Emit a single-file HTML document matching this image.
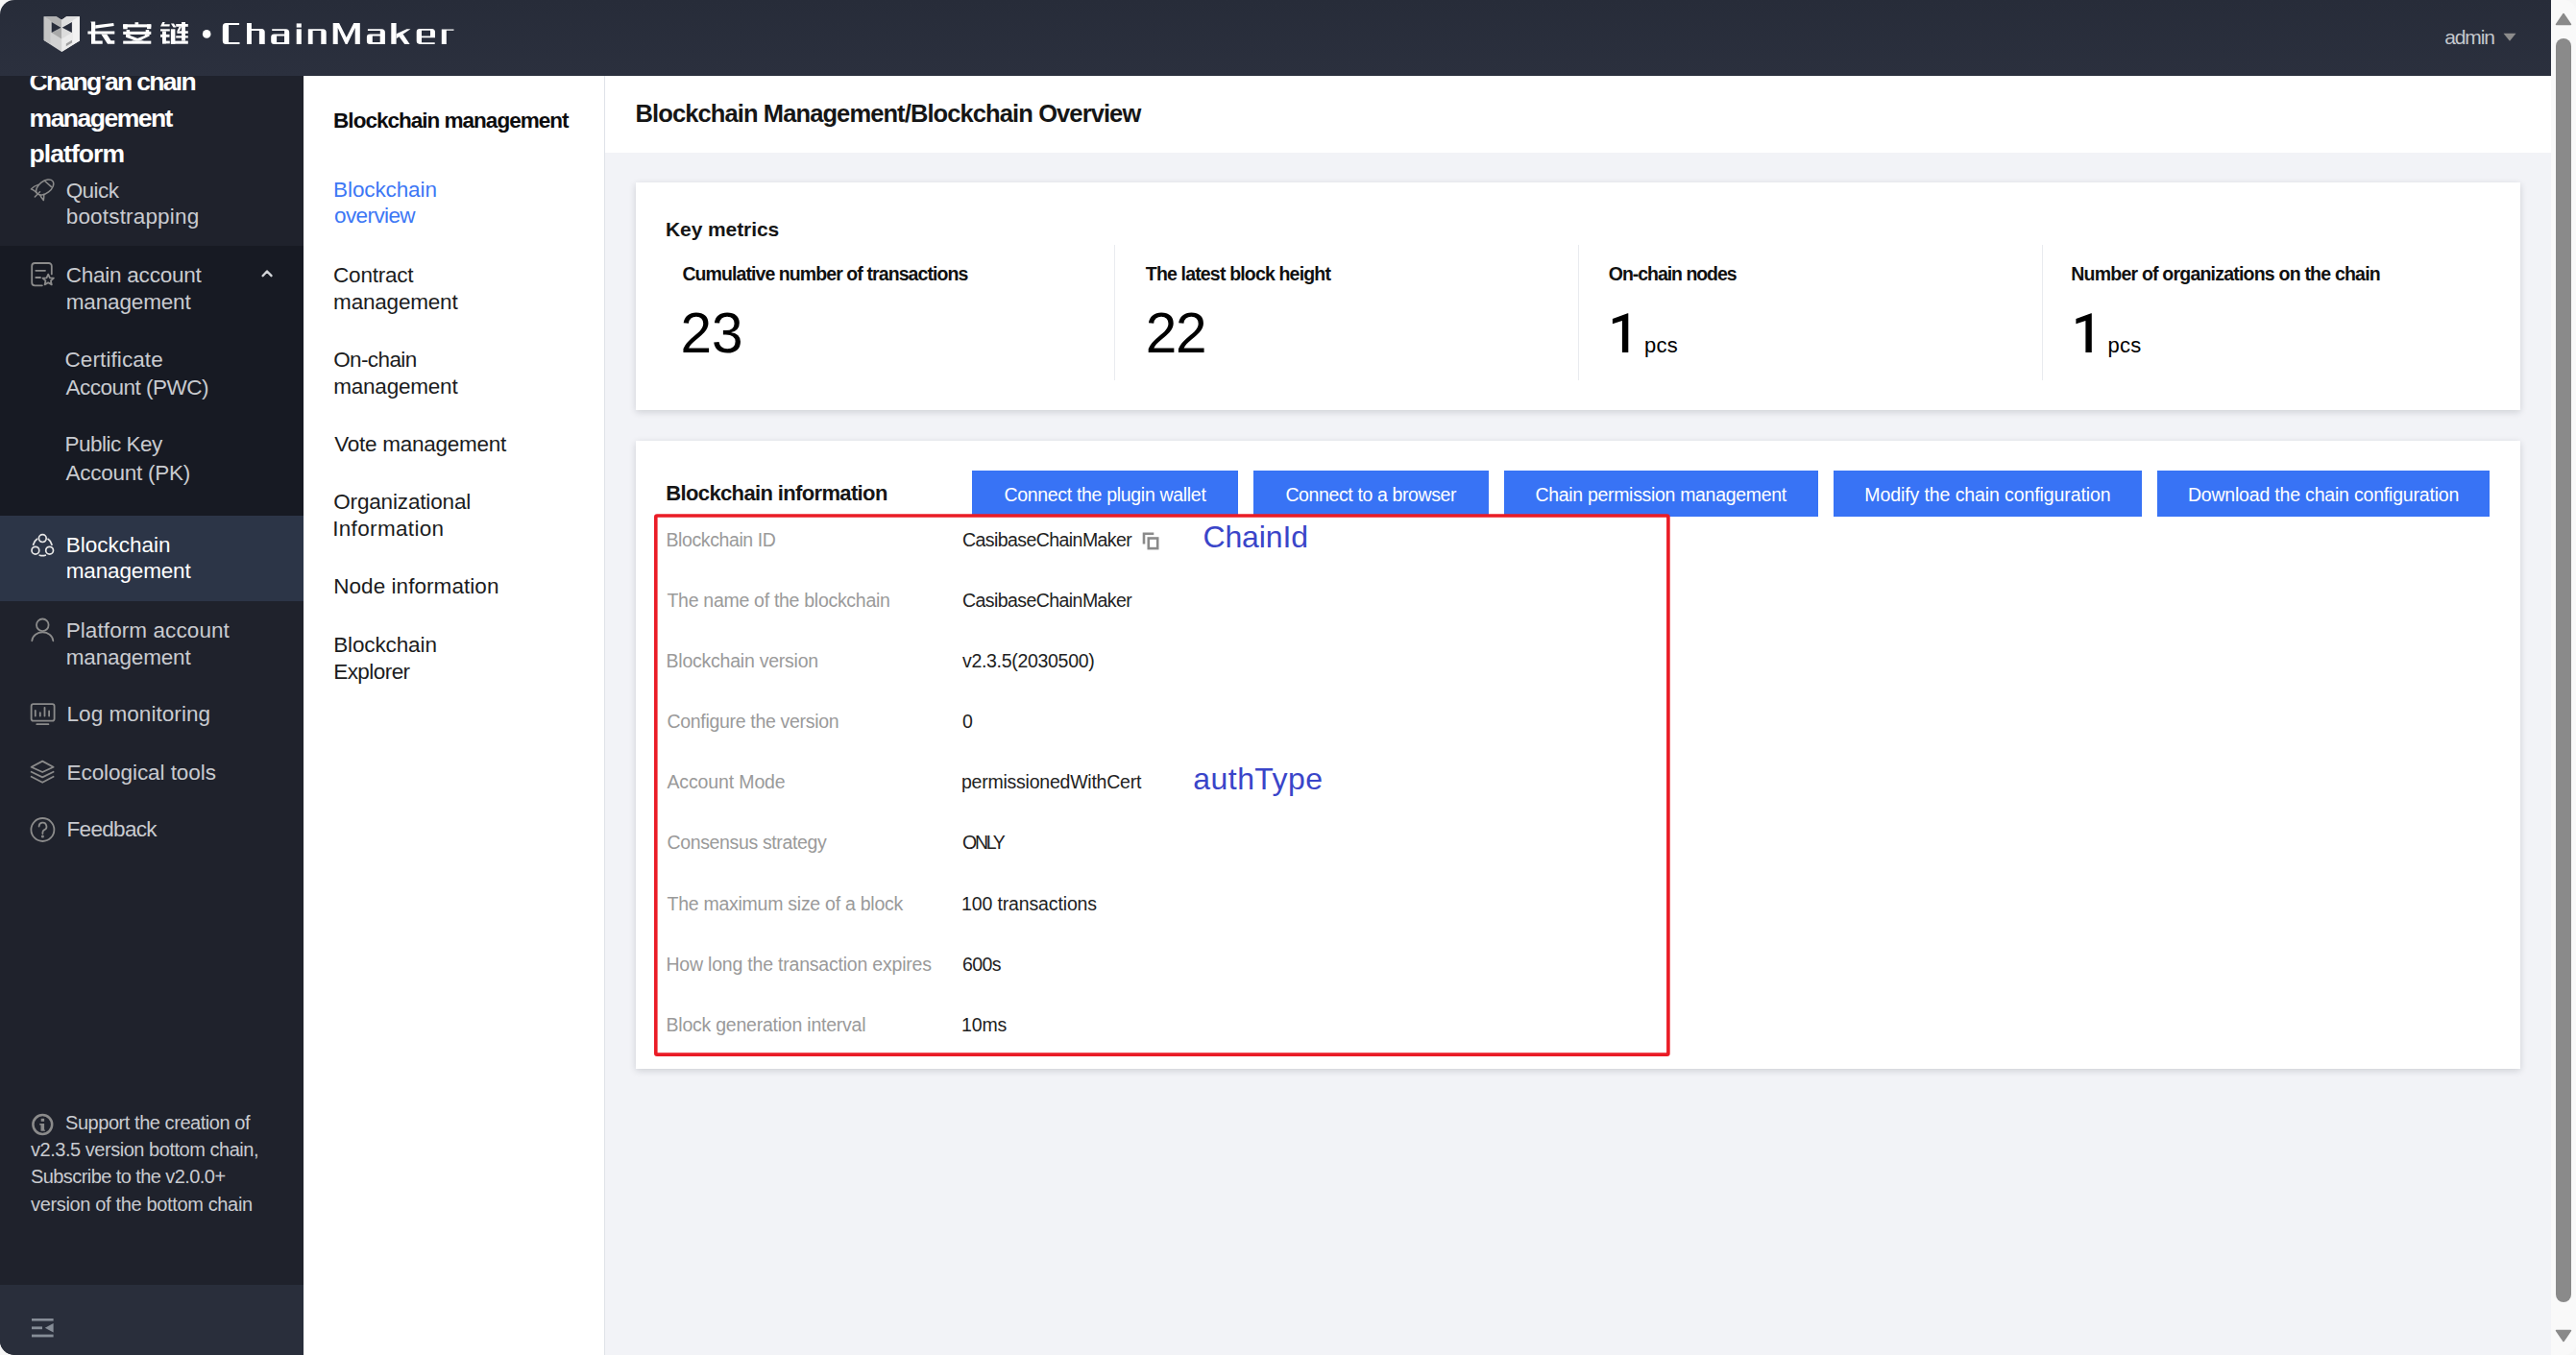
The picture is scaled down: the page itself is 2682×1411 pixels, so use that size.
<!DOCTYPE html>
<html><head><meta charset="utf-8"><title>ChainMaker</title><style>
*{margin:0;padding:0;box-sizing:border-box}
html,body{width:2682px;height:1411px;overflow:hidden;background:#f6f6f6}
body{position:relative;font-family:"Liberation Sans",sans-serif}
.a{position:absolute}
.t{position:absolute;white-space:nowrap;font-family:"Liberation Sans",sans-serif}

.hdr{z-index:5}
.rb{z-index:4}
</style></head><body>

<!-- sidebar -->
<div class="a" style="left:0;top:79px;width:316px;height:1332px;background:#1f222c;border-bottom-left-radius:15px;overflow:hidden">
  <div class="a" style="left:0;top:177px;width:316px;height:281px;background:#171a23"></div>
  <div class="a" style="left:0;top:458px;width:316px;height:89px;background:#2c3547"></div>
  <div class="a" style="left:0;top:1259px;width:316px;height:73px;background:#292e3b"></div>
</div>
<!-- submenu -->
<div class="a" style="left:316px;top:79px;width:314px;height:1332px;background:#ffffff;border-right:1px solid #dfe2e8"></div>
<!-- main -->
<div class="a" style="left:630px;top:79px;width:2026px;height:80px;background:#ffffff"></div>
<div class="a" style="left:630px;top:159px;width:2026px;height:1252px;background:#f2f3f7"></div>
<!-- card1 -->
<div class="a" style="left:662px;top:190px;width:1962px;height:237px;background:#fff;box-shadow:0 2px 7px rgba(20,25,40,0.16)"></div>
<div class="a" style="left:1160px;top:255px;width:1px;height:141px;background:#e9ebef"></div>
<div class="a" style="left:1643px;top:255px;width:1px;height:141px;background:#e9ebef"></div>
<div class="a" style="left:2126px;top:255px;width:1px;height:141px;background:#e9ebef"></div>
<!-- card2 -->
<div class="a" style="left:662px;top:459px;width:1962px;height:654px;background:#fff;box-shadow:0 2px 7px rgba(20,25,40,0.16)"></div>
<!-- buttons -->
<div class="a" style="left:1012px;top:490px;width:277px;height:48px;background:#3873f5"></div>
<div class="a" style="left:1305px;top:490px;width:245px;height:48px;background:#3873f5"></div>
<div class="a" style="left:1566px;top:490px;width:327px;height:48px;background:#3873f5"></div>
<div class="a" style="left:1909px;top:490px;width:321px;height:48px;background:#3873f5"></div>
<div class="a" style="left:2246px;top:490px;width:346px;height:48px;background:#3873f5"></div>
<!-- scrollbar -->
<div class="a" style="left:2656px;top:0;width:26px;height:1411px;background:#f9f9f9;border-top-right-radius:12px;border-bottom-right-radius:12px"></div>
<div class="a" style="left:2661px;top:40px;width:16px;height:1316px;background:#8a8a8a;border-radius:8px"></div>
<svg class="a" style="left:2656px;top:0" width="26" height="1411">
  <path d="M13 14.5 L20.5 25.5 L5.5 25.5 Z" fill="#8a8a8a" stroke="#8a8a8a" stroke-width="1.5" stroke-linejoin="round"/>
  <path d="M13 1396.5 L20.5 1385.5 L5.5 1385.5 Z" fill="#8a8a8a" stroke="#8a8a8a" stroke-width="1.5" stroke-linejoin="round"/>
</svg>
<!-- header -->
<div class="a hdr" style="left:0;top:0;width:2656px;height:79px;background:linear-gradient(#272c39,#2b303e);border-top-left-radius:15px"></div>
<!-- red box -->
<svg class="a rb" style="left:670px;top:525px" width="1080" height="585" viewBox="670 525 1080 585"><rect x="682.8" y="537" width="1054.1" height="561.1" rx="1.2" fill="none" stroke="#ea1c26" stroke-width="3.6"/></svg>


<svg class="a" style="left:0;top:0" width="316" height="1411" viewBox="0 0 316 1411" fill="none" stroke="#8b8b8b" stroke-width="1.8" stroke-linecap="round" stroke-linejoin="round">
  <!-- rocket -->
  <g stroke-width="1.5">
  <ellipse cx="46.7" cy="195" rx="10.4" ry="6.3" transform="rotate(-38 46.7 195)"/>
  <path d="M46.9 188.7 L53.3 194.4"/>
  <path d="M39.8 192.4 Q35 193.8 32.4 196.9 Q35.8 198 37.9 200.6"/>
  <path d="M45.8 202.4 Q45.8 205.6 45.3 208.6 Q43 205.8 41.6 202.9"/>
  <path d="M41.5 199.8 L36.3 205"/>
  </g>
  <!-- doc star -->
  <path d="M43.9 297.3 H36.2 a3 3 0 0 1 -3 -3 V277 a3 3 0 0 1 3 -3 H50.8 a3 3 0 0 1 3 3 V285.4"/>
  <path d="M37.3 281.8 H47"/>
  <path d="M37.3 289 H42"/>
  <path d="M50.2 285.6 L51.9 289.3 L55.9 289.7 L52.9 292.4 L53.8 296.4 L50.2 294.3 L46.6 296.4 L47.5 292.4 L44.5 289.7 L48.5 289.3 Z"/>
  <!-- chevron up -->
  <path d="M273.6 287.2 L278 282.5 L282.5 287.2" stroke="#d2d4d8" stroke-width="2.4"/>
  <!-- person -->
  <circle cx="44.3" cy="650.8" r="6.3"/>
  <path d="M33.3 667.3 C 34.2 655.5, 54.4 655.5, 55.3 667.3"/>
  <!-- monitor -->
  <rect x="32.6" y="733.2" width="24" height="17.4" rx="2.2"/>
  <path d="M38.3 754.2 H50.4"/>
  <path d="M36.8 740 V745.6 M41.8 742.2 V745.6 M46.5 736.8 V745.6 M51.1 740.5 V745.6"/>
  <!-- layers -->
  <path d="M44.2 792.6 L55.6 798.8 L44.2 804 L32.6 798.8 Z"/>
  <path d="M32.6 803.8 L44.2 809.4 L55.6 803.8"/>
  <path d="M32.6 808.8 L44.2 814.8 L55.6 808.8"/>
  <!-- question -->
  <circle cx="44.4" cy="864" r="12"/>
  <path d="M40.6 860.6 a3.9 3.9 0 1 1 5.6 3.5 c-1.3 0.7 -1.8 1.5 -1.8 2.8 v1.1"/>
  <circle cx="44.4" cy="870.9" r="0.6" fill="#8b8b8b"/>
  <!-- info -->
  <circle cx="44.3" cy="1171" r="9.9" stroke-width="2.5"/>
  <rect x="42.7" y="1164.8" width="3.4" height="3" fill="#8b8b8b" stroke="none"/>
  <polygon points="41.2,1169.9 46.1,1169.9 46.1,1176 47.3,1177.7 42.5,1177.7 42.5,1171.6 41.2,1171.6" fill="#8b8b8b" stroke="none"/>
</svg>
<svg class="a" style="left:0;top:0" width="316" height="1411" viewBox="0 0 316 1411" fill="none" stroke="#e6e6e6" stroke-width="1.7" stroke-linecap="round">
  <!-- three circles (active) -->
  <circle cx="44.3" cy="560.6" r="3.9"/>
  <circle cx="36.9" cy="573.2" r="3.9"/>
  <circle cx="51.6" cy="573.2" r="3.9"/>
  <path d="M34.6 567.2 A9.8 9.8 0 0 1 38.6 561.3"/>
  <path d="M50 561.3 A9.8 9.8 0 0 1 54 567.2"/>
  <path d="M41.3 578.2 A9.8 9.8 0 0 0 47.3 578.2"/>
</svg>
<svg class="a" style="left:0;top:1360px" width="80" height="40" viewBox="0 1360 80 40">
  <rect x="33" y="1373" width="22.6" height="2.6" fill="#868d97"/>
  <rect x="33" y="1381.4" width="11" height="2.8" fill="#868d97"/>
  <polygon points="46.8,1382.7 55.6,1378 55.6,1387.4" fill="#868d97"/>
  <rect x="33" y="1389.6" width="22.6" height="2.8" fill="#868d97"/>
</svg>


<svg class="a" style="left:1180px;top:545px" width="40" height="40" viewBox="1180 545 40 40" fill="none" stroke="#8a8a8a" stroke-width="2.6">
  <path d="M1191 566.6 V555.8 H1201.3"/>
  <rect x="1195.8" y="560.5" width="9.4" height="10.6"/>
</svg>


<svg class="a" style="left:1660px;top:320px" width="560" height="60" viewBox="1660 320 560 60">
  <polygon points="1695.3,326.2 1695.3,367.1 1688.9,367.1 1688.9,333.9 1678.9,337.2 1678.9,332.1 1694.6,326.2" fill="#000"/>
  <polygon points="2177.8,326.2 2177.8,367.1 2171.4,367.1 2171.4,333.9 2161.4,337.2 2161.4,332.1 2177.1,326.2" fill="#000"/>
</svg>

<div class="t" style="left:30.60px;top:72.00px;font-size:26.5px;line-height:26.5px;font-weight:700;color:#ffffff;letter-spacing:-1.712px;z-index:1;">Chang&#x27;an chain</div>
<div class="t" style="left:30.60px;top:110.00px;font-size:26.5px;line-height:26.5px;font-weight:700;color:#ffffff;letter-spacing:-1.515px;z-index:1;">management</div>
<div class="t" style="left:30.60px;top:147.00px;font-size:26.5px;line-height:26.5px;font-weight:700;color:#ffffff;letter-spacing:-0.934px;z-index:1;">platform</div>
<div class="t" style="left:68.70px;top:188.00px;font-size:22.5px;line-height:22.5px;font-weight:400;color:#c9cbd0;letter-spacing:-0.566px;">Quick</div>
<div class="t" style="left:68.70px;top:215.00px;font-size:22.5px;line-height:22.5px;font-weight:400;color:#c9cbd0;letter-spacing:0.180px;">bootstrapping</div>
<div class="t" style="left:68.70px;top:276.00px;font-size:22.5px;line-height:22.5px;font-weight:400;color:#c9cbd0;letter-spacing:-0.233px;">Chain account</div>
<div class="t" style="left:68.70px;top:304.00px;font-size:22.5px;line-height:22.5px;font-weight:400;color:#c9cbd0;letter-spacing:-0.142px;">management</div>
<div class="t" style="left:67.50px;top:364.00px;font-size:22.5px;line-height:22.5px;font-weight:400;color:#c9cbd0;letter-spacing:0.093px;">Certificate</div>
<div class="t" style="left:68.50px;top:393.00px;font-size:22.5px;line-height:22.5px;font-weight:400;color:#c9cbd0;letter-spacing:-0.503px;">Account (PWC)</div>
<div class="t" style="left:67.50px;top:452.00px;font-size:22.5px;line-height:22.5px;font-weight:400;color:#c9cbd0;letter-spacing:-0.517px;">Public Key</div>
<div class="t" style="left:68.50px;top:482.00px;font-size:22.5px;line-height:22.5px;font-weight:400;color:#c9cbd0;letter-spacing:-0.260px;">Account (PK)</div>
<div class="t" style="left:68.70px;top:557.00px;font-size:22.5px;line-height:22.5px;font-weight:400;color:#ffffff;letter-spacing:-0.011px;">Blockchain</div>
<div class="t" style="left:68.70px;top:584.00px;font-size:22.5px;line-height:22.5px;font-weight:400;color:#ffffff;letter-spacing:-0.142px;">management</div>
<div class="t" style="left:68.70px;top:646.00px;font-size:22.5px;line-height:22.5px;font-weight:400;color:#c9cbd0;letter-spacing:0.088px;">Platform account</div>
<div class="t" style="left:68.70px;top:674.00px;font-size:22.5px;line-height:22.5px;font-weight:400;color:#c9cbd0;letter-spacing:-0.142px;">management</div>
<div class="t" style="left:69.50px;top:733.00px;font-size:22.5px;line-height:22.5px;font-weight:400;color:#c9cbd0;letter-spacing:0.052px;">Log monitoring</div>
<div class="t" style="left:69.50px;top:794.00px;font-size:22.5px;line-height:22.5px;font-weight:400;color:#c9cbd0;letter-spacing:-0.059px;">Ecological tools</div>
<div class="t" style="left:69.50px;top:853.00px;font-size:22.5px;line-height:22.5px;font-weight:400;color:#c9cbd0;letter-spacing:-0.680px;">Feedback</div>
<div class="t" style="left:68.00px;top:1159.00px;font-size:20px;line-height:20px;font-weight:400;color:#c9cbd0;letter-spacing:-0.445px;">Support the creation of</div>
<div class="t" style="left:32.00px;top:1187.00px;font-size:20px;line-height:20px;font-weight:400;color:#c9cbd0;letter-spacing:-0.466px;">v2.3.5 version bottom chain,</div>
<div class="t" style="left:32.00px;top:1215.00px;font-size:20px;line-height:20px;font-weight:400;color:#c9cbd0;letter-spacing:-0.573px;">Subscribe to the v2.0.0+</div>
<div class="t" style="left:32.00px;top:1244.00px;font-size:20px;line-height:20px;font-weight:400;color:#c9cbd0;letter-spacing:-0.347px;">version of the bottom chain</div>
<div class="t" style="left:2545.20px;top:28.00px;font-size:21px;line-height:21px;font-weight:400;color:#c4c7cc;letter-spacing:-1.129px;z-index:7;">admin</div>
<div class="t" style="left:347.10px;top:115.00px;font-size:22.5px;line-height:22.5px;font-weight:700;color:#0d0d0f;letter-spacing:-0.984px;">Blockchain management</div>
<div class="t" style="left:347.10px;top:187.00px;font-size:22.5px;line-height:22.5px;font-weight:400;color:#3d77f5;letter-spacing:-0.111px;">Blockchain</div>
<div class="t" style="left:348.10px;top:214.00px;font-size:22.5px;line-height:22.5px;font-weight:400;color:#3d77f5;letter-spacing:-0.619px;">overview</div>
<div class="t" style="left:347.10px;top:276.00px;font-size:22.5px;line-height:22.5px;font-weight:400;color:#1b1c21;letter-spacing:-0.226px;">Contract</div>
<div class="t" style="left:347.10px;top:304.00px;font-size:22.5px;line-height:22.5px;font-weight:400;color:#1b1c21;letter-spacing:-0.198px;">management</div>
<div class="t" style="left:347.20px;top:364.00px;font-size:22.5px;line-height:22.5px;font-weight:400;color:#1b1c21;letter-spacing:-0.612px;">On-chain</div>
<div class="t" style="left:347.20px;top:392.00px;font-size:22.5px;line-height:22.5px;font-weight:400;color:#1b1c21;letter-spacing:-0.209px;">management</div>
<div class="t" style="left:348.20px;top:452.00px;font-size:22.5px;line-height:22.5px;font-weight:400;color:#1b1c21;letter-spacing:-0.255px;">Vote management</div>
<div class="t" style="left:347.20px;top:512.00px;font-size:22.5px;line-height:22.5px;font-weight:400;color:#1b1c21;letter-spacing:-0.153px;">Organizational</div>
<div class="t" style="left:346.20px;top:540.00px;font-size:22.5px;line-height:22.5px;font-weight:400;color:#1b1c21;letter-spacing:0.336px;">Information</div>
<div class="t" style="left:347.20px;top:600.00px;font-size:22.5px;line-height:22.5px;font-weight:400;color:#1b1c21;letter-spacing:0.058px;">Node information</div>
<div class="t" style="left:347.20px;top:661.00px;font-size:22.5px;line-height:22.5px;font-weight:400;color:#1b1c21;letter-spacing:-0.122px;">Blockchain</div>
<div class="t" style="left:347.20px;top:689.00px;font-size:22.5px;line-height:22.5px;font-weight:400;color:#1b1c21;letter-spacing:-0.556px;">Explorer</div>
<div class="t" style="left:661.60px;top:106.00px;font-size:25.5px;line-height:25.5px;font-weight:700;color:#161616;letter-spacing:-0.899px;">Blockchain Management/Blockchain Overview</div>
<div class="t" style="left:693.00px;top:228.00px;font-size:21px;line-height:21px;font-weight:700;color:#161616;letter-spacing:-0.089px;">Key metrics</div>
<div class="t" style="left:710.40px;top:276.00px;font-size:19.5px;line-height:19.5px;font-weight:700;color:#111111;letter-spacing:-0.915px;">Cumulative number of transactions</div>
<div class="t" style="left:1192.80px;top:276.00px;font-size:19.5px;line-height:19.5px;font-weight:700;color:#111111;letter-spacing:-0.827px;">The latest block height</div>
<div class="t" style="left:1674.80px;top:276.00px;font-size:19.5px;line-height:19.5px;font-weight:700;color:#111111;letter-spacing:-1.038px;">On-chain nodes</div>
<div class="t" style="left:2156.30px;top:276.00px;font-size:19.5px;line-height:19.5px;font-weight:700;color:#111111;letter-spacing:-0.786px;">Number of organizations on the chain</div>
<div class="t" style="left:708.60px;top:318.00px;font-size:58.5px;line-height:58.5px;font-weight:400;color:#000;letter-spacing:-0.035px;">23</div>
<div class="t" style="left:1192.70px;top:318.00px;font-size:58.5px;line-height:58.5px;font-weight:400;color:#000;letter-spacing:-1.235px;">22</div>
<div class="t" style="left:1712.00px;top:349.00px;font-size:22px;line-height:22px;font-weight:400;color:#000;letter-spacing:0.232px;">pcs</div>
<div class="t" style="left:2194.50px;top:349.00px;font-size:22px;line-height:22px;font-weight:400;color:#000;letter-spacing:0.232px;">pcs</div>
<div class="t" style="left:693.30px;top:503.00px;font-size:22px;line-height:22px;font-weight:700;color:#161616;letter-spacing:-0.640px;">Blockchain information</div>
<div class="t" style="left:1045.40px;top:506.00px;font-size:19.5px;line-height:19.5px;font-weight:400;color:#ffffff;letter-spacing:-0.311px;">Connect the plugin wallet</div>
<div class="t" style="left:1338.40px;top:506.00px;font-size:19.5px;line-height:19.5px;font-weight:400;color:#ffffff;letter-spacing:-0.382px;">Connect to a browser</div>
<div class="t" style="left:1598.50px;top:506.00px;font-size:19.5px;line-height:19.5px;font-weight:400;color:#ffffff;letter-spacing:-0.318px;">Chain permission management</div>
<div class="t" style="left:1941.30px;top:506.00px;font-size:19.5px;line-height:19.5px;font-weight:400;color:#ffffff;letter-spacing:-0.094px;">Modify the chain configuration</div>
<div class="t" style="left:2277.90px;top:506.00px;font-size:19.5px;line-height:19.5px;font-weight:400;color:#ffffff;letter-spacing:-0.191px;">Download the chain configuration</div>
<div class="t" style="left:693.50px;top:553.00px;font-size:19.5px;line-height:19.5px;font-weight:400;color:#9a9a9a;letter-spacing:-0.403px;">Blockchain ID</div>
<div class="t" style="left:1002.00px;top:553.00px;font-size:19.5px;line-height:19.5px;font-weight:400;color:#222222;letter-spacing:-0.566px;">CasibaseChainMaker</div>
<div class="t" style="left:694.50px;top:616.00px;font-size:19.5px;line-height:19.5px;font-weight:400;color:#9a9a9a;letter-spacing:-0.289px;">The name of the blockchain</div>
<div class="t" style="left:1002.00px;top:616.00px;font-size:19.5px;line-height:19.5px;font-weight:400;color:#222222;letter-spacing:-0.566px;">CasibaseChainMaker</div>
<div class="t" style="left:693.50px;top:679.00px;font-size:19.5px;line-height:19.5px;font-weight:400;color:#9a9a9a;letter-spacing:-0.231px;">Blockchain version</div>
<div class="t" style="left:1002.00px;top:679.00px;font-size:19.5px;line-height:19.5px;font-weight:400;color:#222222;letter-spacing:-0.309px;">v2.3.5(2030500)</div>
<div class="t" style="left:694.50px;top:742.00px;font-size:19.5px;line-height:19.5px;font-weight:400;color:#9a9a9a;letter-spacing:-0.315px;">Configure the version</div>
<div class="t" style="left:1002.00px;top:742.00px;font-size:19.5px;line-height:19.5px;font-weight:400;color:#222222;letter-spacing:0.000px;">0</div>
<div class="t" style="left:694.50px;top:805.00px;font-size:19.5px;line-height:19.5px;font-weight:400;color:#9a9a9a;letter-spacing:-0.137px;">Account Mode</div>
<div class="t" style="left:1001.00px;top:805.00px;font-size:19.5px;line-height:19.5px;font-weight:400;color:#222222;letter-spacing:-0.236px;">permissionedWithCert</div>
<div class="t" style="left:694.50px;top:868.00px;font-size:19.5px;line-height:19.5px;font-weight:400;color:#9a9a9a;letter-spacing:-0.358px;">Consensus strategy</div>
<div class="t" style="left:1002.00px;top:868.00px;font-size:19.5px;line-height:19.5px;font-weight:400;color:#222222;letter-spacing:-2.283px;">ONLY</div>
<div class="t" style="left:694.50px;top:932.00px;font-size:19.5px;line-height:19.5px;font-weight:400;color:#9a9a9a;letter-spacing:-0.260px;">The maximum size of a block</div>
<div class="t" style="left:1001.00px;top:932.00px;font-size:19.5px;line-height:19.5px;font-weight:400;color:#222222;letter-spacing:-0.136px;">100 transactions</div>
<div class="t" style="left:693.50px;top:995.00px;font-size:19.5px;line-height:19.5px;font-weight:400;color:#9a9a9a;letter-spacing:-0.208px;">How long the transaction expires</div>
<div class="t" style="left:1002.00px;top:995.00px;font-size:19.5px;line-height:19.5px;font-weight:400;color:#222222;letter-spacing:-0.612px;">600s</div>
<div class="t" style="left:693.50px;top:1058.00px;font-size:19.5px;line-height:19.5px;font-weight:400;color:#9a9a9a;letter-spacing:-0.229px;">Block generation interval</div>
<div class="t" style="left:1001.00px;top:1058.00px;font-size:19.5px;line-height:19.5px;font-weight:400;color:#222222;letter-spacing:-0.111px;">10ms</div>
<div class="t" style="left:1252.40px;top:543.00px;font-size:32px;line-height:32px;font-weight:400;color:#3a45c9;letter-spacing:-0.117px;">ChainId</div>
<div class="t" style="left:1242.30px;top:795.00px;font-size:32px;line-height:32px;font-weight:400;color:#3a45c9;letter-spacing:0.449px;">authType</div>

<svg class="a" style="left:0;top:0;z-index:6" width="500" height="79" viewBox="0 0 500 79">
  <g>
    <polygon points="45.7,17.2 58.8,17.2 64.2,20.7 69.2,17.2 82.8,17.2 82.8,42.5 64.2,53.9 45.7,42.1" fill="#d2d2d2"/>
    <polygon points="64.2,20.7 69.2,17.2 82.8,17.2 82.8,42.5 64.2,53.9" fill="#ebebeb"/>
    <polygon points="46.5,17.4 58.8,17.4 64.2,20.7 64.2,28.8 53.7,22.9" fill="#b2b2b2"/>
    <polygon points="53.7,34 64.2,28.8 64.2,40.5" fill="#a9a9a9"/>
    <polygon points="82,17.6 64.2,28.8 64.2,20.7 69.2,17.4" fill="#dedede"/>
    <polygon points="74.9,34 64.2,28.8 64.2,40.5" fill="#dcdcdc"/>
    <polygon points="45.7,17.2 52.5,21 52.5,45.8 45.7,42.1" fill="#c4c4c4"/>
    <polygon points="82.8,17.2 76,21 76,46 82.8,42.5" fill="#f2f2f2"/>
    <polygon points="53.7,22.9 53.7,34 63.6,28.8" fill="#282d3b"/>
    <polygon points="74.9,22.9 74.9,34 64.7,28.8" fill="#282d3b"/>
    <polygon points="68.8,45.5 75,41.8 75,44.6 68.8,48.3" fill="#a0a0a0"/>
  </g>
  <g fill="#ffffff">
    <!-- 长 -->
    <polygon points="94.4,22.6 99.2,22.6 99.2,42.6 106.7,42.6 106.7,45.7 95,45.7 95,24"/>
    <polygon points="99.2,26.3 118.2,24.1 118.7,27 99.2,29.8"/>
    <rect x="91.4" y="32.5" width="27.9" height="3"/>
    <polygon points="105.3,35.5 111.2,35.5 115.5,42.3 119.3,42.3 119.3,45.7 112,45.7"/>
    <!-- 安 -->
    <rect x="140.5" y="23.2" width="3.7" height="2.6"/>
    <rect x="128.2" y="25.3" width="29.1" height="3.1"/>
    <rect x="128.2" y="25.3" width="4.5" height="5"/>
    <rect x="153" y="25.3" width="4.3" height="4.8"/>
    <rect x="128.2" y="32.8" width="29.1" height="3.1"/>
    <rect x="131.6" y="31" width="3.5" height="2"/>
    <rect x="151.7" y="31" width="3.5" height="2"/>
    <polygon points="131,35.9 135.5,35.9 135.5,37 150,42.6 141.5,42.6 131,38.8"/>
    <polygon points="150.8,35.9 155.6,35.9 155.6,37.4 145,42.6 136.5,42.6 150.8,37"/>
    <rect x="128.2" y="42.6" width="29.1" height="3.1"/>
    <!-- 链 -->
    <polygon points="169.2,23 171.7,23 170.9,25.3 176.8,25.3 176.5,27.5 167,27.5"/>
    <polygon points="177.9,24.4 181,24.4 183.5,28.6 180.5,28.6"/>
    <rect x="167" y="30.3" width="9.8" height="2.2"/>
    <rect x="167" y="35.9" width="9.5" height="2.8"/>
    <rect x="169" y="32.5" width="3.9" height="12.9"/>
    <rect x="169" y="42.6" width="7.8" height="2.8"/>
    <rect x="177.9" y="30.3" width="4.5" height="15.4"/>
    <rect x="177.9" y="42.6" width="17.9" height="3.1"/>
    <rect x="183.2" y="25" width="12.6" height="2.8"/>
    <rect x="189.1" y="23" width="3.9" height="19.6"/>
    <polygon points="186.6,27.8 189.1,27.8 186.6,32.5 184.3,32.5"/>
    <rect x="184.4" y="32.3" width="11.4" height="2.5"/>
    <rect x="183.2" y="37.3" width="12.6" height="2.2"/>
    <!-- dot -->
    <circle cx="215.2" cy="35.4" r="4.3"/>
  </g>
  <g fill="#ffffff">
    <!-- C -->
    <path d="M235.3 24 H249.1 V25.9 H238.1 V44 H249.5 V46 H235.3 Q231.8 46 231.8 42.5 V27.5 Q231.8 24 235.3 24 Z"/>
    <!-- h -->
    <path d="M257 24 H261.9 V30.1 H272.2 Q275.7 30.1 275.7 33.6 V46 H269.9 V32 H261.9 V46 H257 Z"/>
    <!-- a -->
    <path fill-rule="evenodd" d="M283.2 30.3 H297.7 Q301.2 30.3 301.2 33.8 V46 H285.4 Q282.2 46 282.2 42.8 V38.6 Q282.2 35.4 285.4 35.4 H296.1 V32.1 H283.2 Z M288.1 37.5 V44.1 H296 V37.5 Z"/>
    <!-- i -->
    <rect x="308.7" y="24.4" width="5.1" height="4.2"/>
    <rect x="308.7" y="30.3" width="5.1" height="15.7"/>
    <!-- n -->
    <path d="M320.8 30.2 H336.2 Q339.7 30.2 339.7 33.7 V45.9 H334.3 V32.1 H325.6 V45.9 H320.8 Z"/>
    <!-- M -->
    <polygon points="346.7,24 353.1,24 360.7,38.9 368.3,24 374.8,24 374.8,45.9 369.7,45.9 369.7,29 361.6,45.9 359.7,45.9 351.7,29 351.7,45.9 346.7,45.9"/>
    <!-- a -->
    <path fill-rule="evenodd" d="M382.9 30.3 H397.4 Q400.9 30.3 400.9 33.8 V46 H385.1 Q381.9 46 381.9 42.8 V38.6 Q381.9 35.4 385.1 35.4 H395.8 V32.1 H382.9 Z M387.8 37.5 V44.1 H395.7 V37.5 Z"/>
    <!-- k -->
    <rect x="407.3" y="24" width="5.3" height="21.9"/>
    <polygon points="412.6,35.2 423.5,30.2 427.5,30.2 412.6,40.2"/>
    <polygon points="415.3,37.8 419.6,35.6 426.6,45.9 421.2,45.9"/>
    <!-- e -->
    <path fill-rule="evenodd" d="M437 29.9 H449.5 Q453 29.9 453 33.4 V39.3 H439 V44.2 H452.7 V45.9 H437 Q433.7 45.9 433.7 42.6 V33.2 Q433.7 29.9 437 29.9 Z M439 31.8 V37.5 H448 V31.8 Z"/>
    <!-- r -->
    <path d="M459.8 30.6 H472.5 V31.8 H464.8 V45.9 H459.8 Z"/>
  </g>
  <!-- admin caret -->
</svg>
<svg class="a" style="left:2590px;top:25px;z-index:6" width="40" height="30" viewBox="2590 25 40 30">
  <polygon points="2606.5,34.7 2619.5,34.7 2613,42.8" fill="#8c8c8c"/>
</svg>

</body></html>
